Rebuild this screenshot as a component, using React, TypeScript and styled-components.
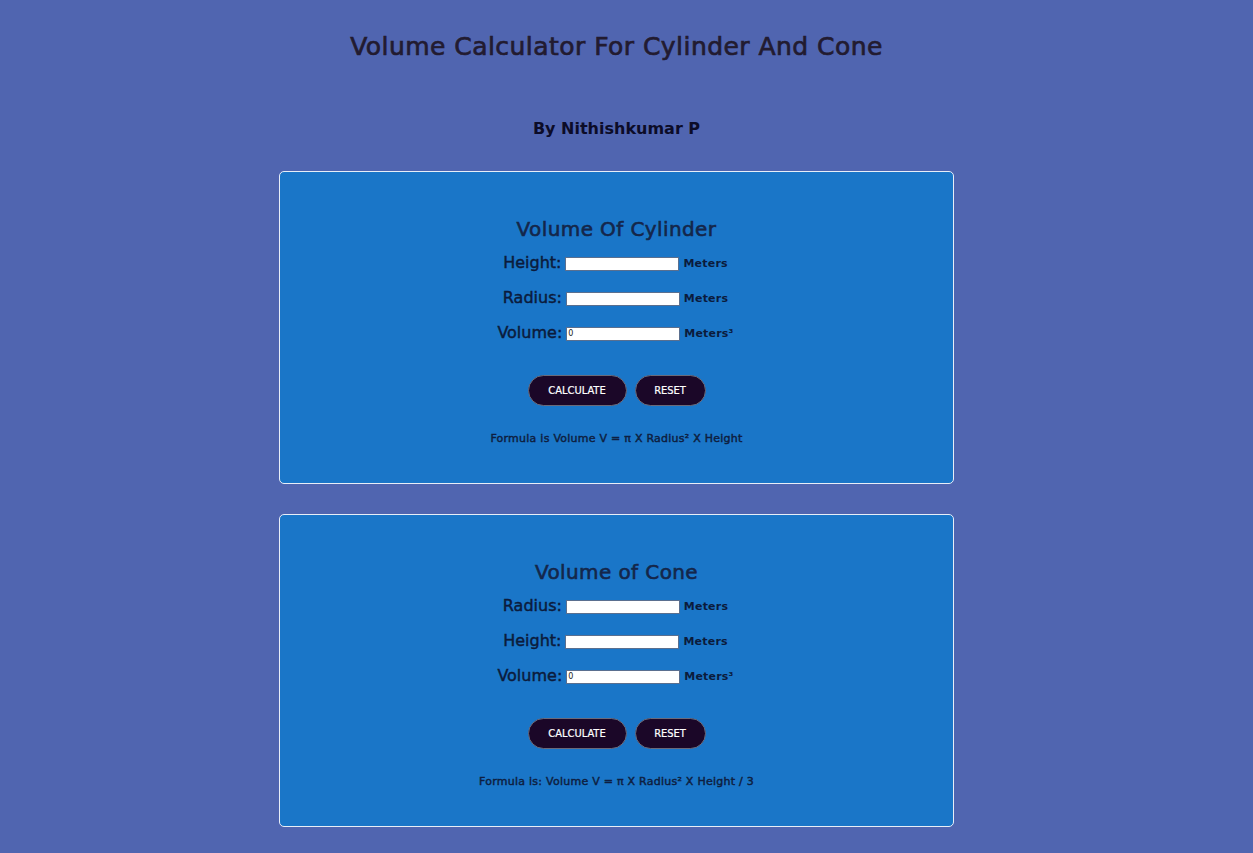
import React from "react";
import styled, { createGlobalStyle } from "styled-components";

const Global = createGlobalStyle`
  html, body { margin: 0; padding: 0; }
  body {
    background: #5065b0;
    font-family: "DejaVu Sans", Verdana, sans-serif;
    min-height: 853px;
  }
`;

const Page = styled.div`
  display: flex;
  flex-direction: column;
  align-items: center;
  padding: 32px 20px 27px 0;
`;

const Title = styled.h1`
  margin: 0;
  font-size: 25px;
  font-weight: normal;
  color: #221b30;
  letter-spacing: 0.45px;
  line-height: 30px;
  -webkit-text-stroke: 0.7px #221b30;
`;

const Byline = styled.h2`
  margin: 56px 0 0;
  font-size: 16px;
  font-weight: bold;
  color: #0c0c28;
  line-height: 22px;
`;

const Card = styled.section<{ $top: number }>`
  margin-top: ${(p) => p.$top}px;
  width: 673px;
  height: 311px;
  box-sizing: content-box;
  background: #1a76c8;
  border: 1px solid #e8eef8;
  border-radius: 5px;
  display: flex;
  flex-direction: column;
  align-items: center;
`;

const CardTitle = styled.h3`
  margin: 44px 0 0;
  font-size: 20px;
  font-weight: normal;
  color: #14264a;
  line-height: 26px;
  letter-spacing: 0.4px;
  -webkit-text-stroke: 0.6px #14264a;
`;

const Rows = styled.div`
  display: flex;
  flex-direction: column;
  gap: 14px;
  margin-top: 11px;
`;

const Row = styled.div`
  display: flex;
  align-items: center;
  justify-content: center;
  height: 21px;
  gap: 4px;
`;

const Label = styled.span`
  font-size: 16px;
  color: #0b1b3c;
  margin-top: -3px;
  margin-left: -2px;
  -webkit-text-stroke: 0.45px #0b1b3c;
`;

const Input = styled.input`
  width: 110px;
  height: 10px;
  border: 1px solid #5a6f8f;
  background: #fff;
  font-size: 8px;
  padding: 1px;
  font-family: "DejaVu Sans", sans-serif;
  color: #222;
  margin: 0;
`;

const Unit = styled.span`
  font-size: 11px;
  font-weight: bold;
  color: #0b1b3c;
  letter-spacing: 0.2px;
`;

const Buttons = styled.div`
  display: flex;
  gap: 8px;
  margin-top: 31px;
`;

const Button = styled.button<{ $w: number }>`
  width: ${(p) => p.$w}px;
  height: 31px;
  border-radius: 16px;
  background: #1b0728;
  border: 1px solid #6a6a7a;
  color: #fff;
  font-family: "DejaVu Sans Condensed", "DejaVu Sans", sans-serif;
  font-size: 11px;
  padding: 0;
  cursor: pointer;
  -webkit-text-stroke: 0.2px #fff;
`;

const Formula = styled.p`
  margin: 26px 0 0;
  font-size: 11px;
  font-weight: normal;
  color: #0e1e40;
  letter-spacing: 0.25px;
  -webkit-text-stroke: 0.45px #0e1e40;
`;

type Field = { label: string; unit: React.ReactNode; value?: string };

function Calculator(props: {
  title: string;
  fields: Field[];
  formula: string;
  top: number;
}) {
  return (
    <Card $top={props.top}>
      <CardTitle>{props.title}</CardTitle>
      <Rows>
        {props.fields.map((f) => (
          <Row key={f.label}>
            <Label>{f.label}</Label>
            <Input type="text" defaultValue={f.value ?? ""} readOnly={f.value !== undefined} />
            <Unit>{f.unit}</Unit>
          </Row>
        ))}
      </Rows>
      <Buttons>
        <Button $w={99}>CALCULATE</Button>
        <Button $w={71}>RESET</Button>
      </Buttons>
      <Formula>{props.formula}</Formula>
    </Card>
  );
}

export default function App() {
  return (
    <>
      <Global />
      <Page>
        <Title>Volume Calculator For Cylinder And Cone</Title>
        <Byline>By Nithishkumar P</Byline>
        <Calculator
          top={31}
          title="Volume Of Cylinder"
          fields={[
            { label: "Height:", unit: "Meters" },
            { label: "Radius:", unit: "Meters" },
            { label: "Volume:", unit: "Meters³", value: "0" },
          ]}
          formula="Formula is Volume V = π X Radius² X Height"
        />
        <Calculator
          top={30}
          title="Volume of Cone"
          fields={[
            { label: "Radius:", unit: "Meters" },
            { label: "Height:", unit: "Meters" },
            { label: "Volume:", unit: "Meters³", value: "0" },
          ]}
          formula="Formula is: Volume V = π X Radius² X Height / 3"
        />
      </Page>
    </>
  );
}
